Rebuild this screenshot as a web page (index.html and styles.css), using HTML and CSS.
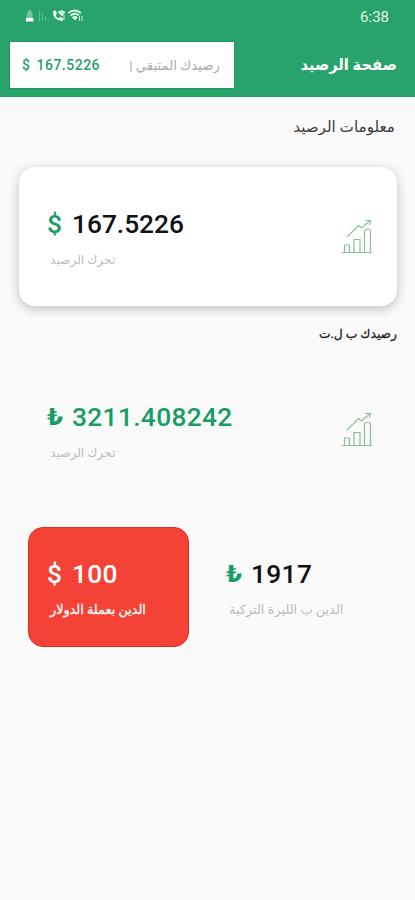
FILE: index.html
```html
<!DOCTYPE html>
<html lang="ar">
<head>
<meta charset="utf-8">
<title>صفحة الرصيد</title>
<link rel="stylesheet" href="styles.css">
</head>
<body>
<svg width="0" height="0" class="defs">
  <symbol id="chart" viewBox="0 0 32 36">
    <path d="M1 33.500H31M3.500 33V26H8.500V33M13 33V20.500H19V33M23.500 33V12.500Q23.500 10.500 25.500 10.500H27.500Q29.500 10.500 29.500 12.500V33M6 18L17.500 6.500L20.500 9L28 2.500M24 1.500L29.500 1.500L28.500 6"/>
  </symbol>
</svg>
<header class="top">
  <div class="status">
    <svg class="signals" width="60" height="16" viewBox="0 0 60 16">
      <path d="M2 5.500Q2 4 3.500 3V2H5.500V3Q7.500 4 7.500 5.500V10H1.500Z" fill="#72c79c"/>
      <path d="M1 10H8.500V13.500H1Z" fill="#fff"/>
      <path d="M14.500 3V13M17.500 6V13M20.500 9V13M23.500 12V13" stroke="#68bd91" stroke-width="1"/>
      <path d="M28 4Q28 12 37 13Q39 12 38 10L35 9L33.500 10.500Q30.500 8.500 31 6.500L32 5L30.500 2.500Q28.500 2 28 4Z" fill="#f4fff9"/>
      <path d="M33 4Q36.500 1.500 40 4L37 8ZM39 7V12" fill="#c9f0dc" stroke="#c9f0dc"/>
      <path d="M43.500 5Q49.500 0 56 5M45.500 7.500Q50 4 54 7.500M47.500 10Q50 8 52 10" fill="none" stroke="#dcf8e9" stroke-width="1.800"/>
      <path d="M50 12L48 9.500H52ZM54.500 8V13M57 8V13" fill="#dcf8e9" stroke="#dcf8e9"/>
    </svg>
    <time>6:38</time>
  </div>
  <div class="bar">
    <div class="remaining">
      <span class="rem-num"><i>$</i>167.5226</span>
      <span class="rem-label" dir="rtl">رصيدك المتبقي |</span>
    </div>
    <h1 dir="rtl">صفحة الرصيد</h1>
  </div>
</header>
<main>
  <h2 class="t-info" dir="rtl">معلومات الرصيد</h2>
  <section class="card raised">
    <div class="data"><p class="amount"><b>$</b><span class="n1">167.5226</span></p><p class="note move" dir="rtl">تحرك الرصيد</p></div>
    <svg class="chart" width="32" height="36"><use href="#chart"/></svg>
  </section>
  <h2 class="t-lira" dir="rtl">رصيدك ب ل.ت</h2>
  <section class="card">
    <div class="data"><p class="amount green"><b class="lira">₺</b><span class="n2">3211.408242</span></p><p class="note move" dir="rtl">تحرك الرصيد</p></div>
    <svg class="chart" width="32" height="36"><use href="#chart"/></svg>
  </section>
  <div class="debts">
    <section class="debt red"><p class="amount"><b>$</b><span class="n3">100</span></p><p class="note d1" dir="rtl">الدين بعملة الدولار</p></section>
    <section class="debt"><p class="amount"><b class="lira">₺</b><span class="n4">1917</span></p><p class="note d2" dir="rtl">الدين ب الليرة التركية</p></section>
  </div>
</main>
</body>
</html>
```

FILE: styles.css
```css
* { box-sizing: border-box; margin: 0; }
body { width: 415px; height: 900px; overflow: hidden; background: #fafafa; font-family: Roboto, "DejaVu Sans", sans-serif; color: #161616; }
.defs { position: absolute; }
.top { height: 97px; background: #27a36b; border-bottom: 1px solid #229962; }
.status { height: 41px; padding: 8px 26px 0 25px; display: flex; justify-content: space-between; }
.status time { color: #e0f8eb; font-size: 15px; line-height: 18px; }
.bar { display: flex; justify-content: space-between; padding: 0 18px 0 9px; }
.remaining { width: 226px; height: 48px; padding: 0 14px 0 12px; background: #fff; border: 1px solid #1c9a60; display: flex; align-items: center; justify-content: space-between; }
.rem-num { color: #27a071; font-size: 14px; font-weight: 500; letter-spacing: .5px; white-space: nowrap; }
.rem-num i { font-style: normal; margin-right: 6px; }
.rem-label { font-size: 13.3px; color: #aaa; white-space: nowrap; }
h1 { font-size: 16px; line-height: 48px; color: #fff; font-weight: 700; white-space: nowrap; transform: scaleX(.92); transform-origin: right; }
h2 { font-weight: 400; white-space: nowrap; }
.t-info { height: 70px; padding: 18px 20px 0 0; font-size: 15.2px; line-height: 24px; color: #3c3c3c; }
.card { height: 139px; margin: 0 18px 0 19px; padding: 0 24px 0 28px; border-radius: 16px; display: flex; justify-content: space-between; }
.raised { background: #fff; box-shadow: 0 3px 12px #0000003d; }
.amount { display: flex; font-size: 26.3px; line-height: 32px; font-weight: 500; color: #111; white-space: nowrap; }
.amount b { width: 25px; font-weight: 500; color: #179d65; }
.amount .lira { font-family: "DejaVu Sans", sans-serif; font-size: 23px; font-weight: 700; }
.amount.green { color: #179d65; }
.n2, .n3, .n4 { letter-spacing: .35px; }
.data { padding-top: 41px; }
.note { margin: 10px 0 0 3px; width: max-content; font-size: 12.2px; line-height: 20px; color: #bcbcbc; white-space: nowrap; }
.chart { margin-top: 52px; fill: none; stroke: #8fbd9a; stroke-width: 1.2; }
.t-lira { height: 54px; padding: 16px 18px 0 0; font-size: 12.3px; line-height: 24px; color: #222; -webkit-text-stroke: .3px #222; }
.debts { display: flex; gap: 19px; padding: 28px 18px 0 28px; }
.debt { width: 161px; height: 120px; padding: 31px 0 0 18px; border-radius: 15px; }
.debt .note { margin-top: 10px; }
.red { background: #f44336; border: 1px solid #e02a18; padding-top: 30px; }
.red .amount, .red .amount b, .red .note { color: #fff; }
.d1 { font-size: 12.8px; -webkit-text-stroke: .3px #fff; }
.d2 { font-size: 12.9px; }
```
